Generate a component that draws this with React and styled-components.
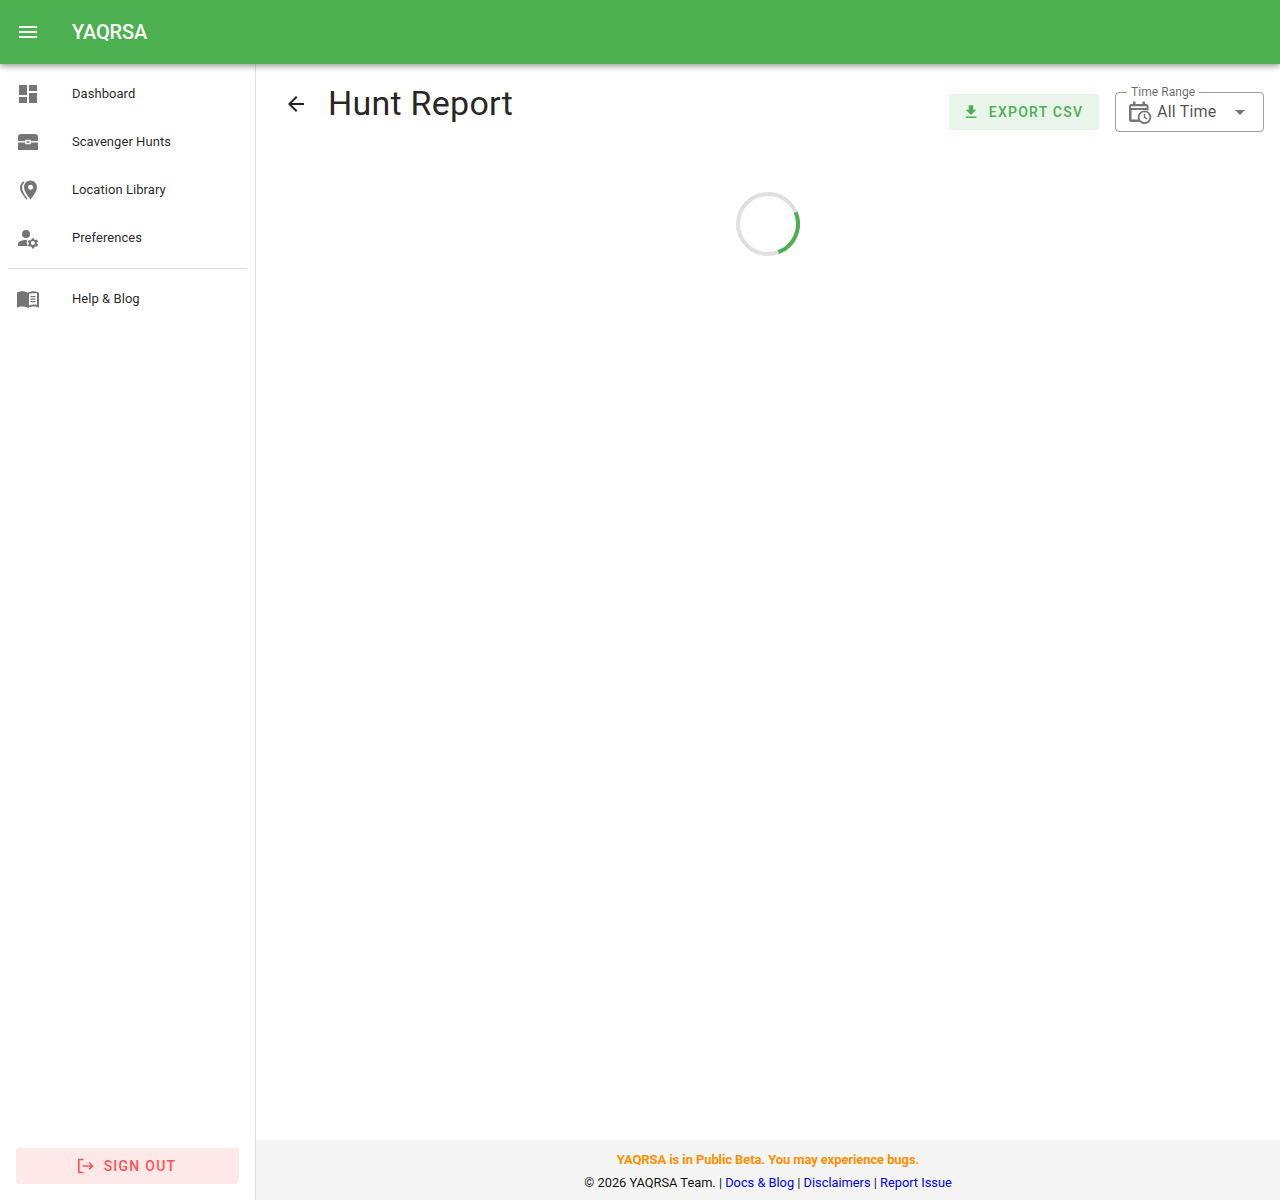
import React from 'react';
import styled, { createGlobalStyle } from 'styled-components';

const Global = createGlobalStyle`
  html, body { margin: 0; padding: 0; height: 100%; background: #fff; }
  body { font-family: Roboto, "Liberation Sans", sans-serif; color: rgba(0,0,0,.87); }
  #root { height: 100vh; }
  * { box-sizing: border-box; }
`;

const Page = styled.div`
  display: flex;
  flex-direction: column;
  height: 100vh;
  overflow: hidden;
`;
const AppBar = styled.header`
  position: relative;
  z-index: 2;
  flex: 0 0 64px;
  display: flex;
  align-items: center;
  padding-left: 16px;
  background: #4caf50;
  color: #fff;
  box-shadow: 0 2px 4px -1px rgba(0,0,0,.2), 0 4px 5px 0 rgba(0,0,0,.14), 0 1px 10px 0 rgba(0,0,0,.12);
`;
const MenuIcon = styled.svg`
  width: 24px;
  height: 24px;
  fill: #fff;
`;
const Brand = styled.div`
  margin-left: 32px;
  font-size: 20px;
  font-weight: 500;
  line-height: 32px;
  letter-spacing: -0.15px;
`;
const Body = styled.div`
  flex: 1;
  display: flex;
  min-height: 0;
`;
const Sidebar = styled.nav`
  flex: 0 0 256px;
  display: flex;
  flex-direction: column;
  padding-top: 5px;
  border-right: 1px solid #e0e0e0;
`;
const NavItem = styled.a`
  display: flex;
  align-items: center;
  height: 48px;
  padding-left: 16px;
  font-size: 13px;
  letter-spacing: 0.05px;
  color: rgba(0,0,0,.87);
`;
const NavIcon = styled.svg`
  flex: 0 0 24px;
  width: 24px;
  height: 24px;
  margin: 2px 32px 0 0;
  fill: #757575;
`;
const Divider = styled.hr`
  margin: 7px 8px 5px;
  border: 0;
  border-top: 1px solid #e0e0e0;
  height: 1px;
`;
const SignOut = styled.button`
  margin: auto 16px 16px;
  height: 36px;
  display: flex;
  align-items: center;
  justify-content: center;
  gap: 9px;
  padding: 0 2px 0 0;
  border: 0;
  border-radius: 4px;
  background: #ffe8e8;
  color: #ff5252;
  font: 500 14px Roboto, sans-serif;
  letter-spacing: 1.25px;
`;
const SignOutIcon = styled.svg`
  width: 18px;
  height: 18px;
  fill: none;
  stroke: #ff5252;
  stroke-width: 1.6;
`;
const Main = styled.main`
  flex: 1;
  min-width: 0;
  display: flex;
  flex-direction: column;
`;
const Content = styled.div`
  flex: 1;
  padding: 16px 16px 0 16px;
`;
const TitleRow = styled.div`
  display: flex;
  align-items: flex-start;
  height: 52px;
`;
const BackButton = styled.svg`
  width: 24px;
  height: 24px;
  margin: 12px 20px 0 12px;
  fill: rgba(0,0,0,.87);
`;
const Title = styled.h1`
  flex: 1;
  margin: 0;
  font-size: 34px;
  font-weight: 400;
  line-height: 46px;
  letter-spacing: 0.25px;
  color: rgba(0,0,0,.87);
`;
const Export = styled.button`
  margin-top: 14px;
  width: 150px;
  height: 36px;
  display: flex;
  align-items: center;
  justify-content: center;
  gap: 9px;
  padding: 0 3px 0 0;
  border: 0;
  border-radius: 4px;
  background: #e9f4ea;
  color: #4caf50;
  font: 500 14px Roboto, sans-serif;
  letter-spacing: 1.25px;
`;
const ExportIcon = styled.svg`
  width: 18px;
  height: 18px;
  fill: #4caf50;
`;
const Select = styled.div`
  position: relative;
  margin: 12px 0 0 16px;
  width: 149px;
  height: 40px;
  display: flex;
  align-items: center;
  padding: 0 11px 0 12px;
  border: 1px solid rgba(0,0,0,.38);
  border-radius: 4px;
  font-size: 16px;
  color: rgba(0,0,0,.7);
`;
const Legend = styled.span`
  position: absolute;
  left: 11px;
  top: -8px;
  padding: 0 4px;
  background: #fff;
  font-size: 12px;
  line-height: 14px;
  letter-spacing: 0.05px;
  color: rgba(0,0,0,.6);
`;
const CalIcon = styled.svg`
  flex: 0 0 24px;
  width: 24px;
  height: 24px;
  margin-right: 5px;
  fill: #757575;
`;
const SelectValue = styled.span`
  flex: 1;
  margin-top: -2px;
  letter-spacing: 0.2px;
`;
const Caret = styled.svg`
  width: 24px;
  height: 24px;
  fill: #757575;
`;
const SpinnerWrap = styled.div`
  display: flex;
  justify-content: center;
  margin-top: 60px;
`;
const Spinner = styled.svg`
  width: 64px;
  height: 64px;
  fill: none;
  stroke-width: 4;
`;
const Footer = styled.footer`
  flex: 0 0 60px;
  display: flex;
  flex-direction: column;
  align-items: center;
  padding-top: 10px;
  background: #f5f5f5;
  box-shadow: 0 -1px 3px rgba(0,0,0,.04);
  font-size: 12.8px;
  line-height: 20px;
  color: rgba(0,0,0,.95);
`;
const Beta = styled.div`
  font-weight: 700;
  color: #ff8f00;
  margin-bottom: 3px;
  font-size: 13px;
  letter-spacing: -0.1px;
`;
const Link = styled.a`
  color: #0000ee;
`;

const navItems = [
  ['Dashboard', <path key="a" d="M3 13h8V3H3v10zm0 8h8v-6H3v6zm10 0h8V11h-8v10zm0-18v6h8V3h-8z" />],
  ['Scavenger Hunts', <path key="b" fillRule="evenodd" d="M5 4h14a3 3 0 0 1 3 3v4h-7.2v-1.2H9.2V11H2V7a3 3 0 0 1 3-3zM2 12.5h7.2v1.7h5.6v-1.7H22V20H2zM10.6 11.2h2.8v1.6h-2.8z" />],
  ['Location Library', <g key="c"><path fillRule="evenodd" d="M14.5 2.5c-3.6 0-6.5 2.9-6.5 6.6 0 4.2 3.6 8.6 6.5 12.6 2.9-4 6.5-8.4 6.5-12.6 0-3.7-2.9-6.6-6.5-6.6zm0 4.2a2.5 2.5 0 1 1 0 5 2.5 2.5 0 0 1 0-5z" /><path d="M7.4 3.6 8.5 4.5C6.9 6 6 7.7 6 9.8c0 3 2.2 6.5 5.6 11l-.9 1C6.700 17 4 13.300 4 9.700 4 7.300 5.200 5.200 7.400 3.600z" /></g>],
  ['Preferences', <g key="d"><circle cx="10" cy="8" r="4" /><path d="M10 14c-3.500 0-8 1.600-8 3.500V20h9.700a7 7 0 0 1-.5-5.900c-.4-.1-.8-.1-1.200-.1z" /><path fillRule="evenodd" d="M20.800 17.200c0-.3.1-.5 0-.7l1.200-1-1.100-1.900-1.500.5c-.4-.3-.8-.5-1.200-.7L18 12.200h-2.200l-.3 1.600c-.4.100-.8.400-1.200.700l-1.500-.5-1.100 1.900 1.200 1c0 .4 0 .7.100 1l-1.200 1 1.100 1.900 1.500-.5c.4.300.8.500 1.200.7l.3 1.500H18l.3-1.600c.4-.1.8-.4 1.200-.7l1.500.5 1.100-1.900-1.200-1c0-.1-.1-.2-.1-.4zm-3.900 1.800a2 2 0 1 1 0-4 2 2 0 0 1 0 4z" /></g>],
];

export default function App() {
  return (
    <Page>
      <Global />
      <AppBar>
        <MenuIcon viewBox="0 0 24 24"><path d="M3 18h18v-2H3v2zm0-5h18v-2H3v2zm0-7v2h18V6H3z" /></MenuIcon>
        <Brand>YAQRSA</Brand>
      </AppBar>
      <Body>
        <Sidebar>
          {navItems.map(([label, icon]) => (
            <NavItem key={label}>
              <NavIcon viewBox="0 0 24 24">{icon}</NavIcon>
              {label}
            </NavItem>
          ))}
          <Divider />
          <NavItem>
            <NavIcon viewBox="0 0 24 24">
              <path fillRule="evenodd" d="M1 5.800C2.500 4.800 4.500 4.300 6.500 4.300c2 0 4 .5 5.500 1.500 1.500-1 3.500-1.500 5.500-1.500 2 0 4 .5 5.500 1.500v15c-1.500-.8-3.500-1.200-5.500-1.200-2 0-4 .5-5.500 1.500-1.500-1-3.500-1.500-5.500-1.500-2 0-4 .4-5.500 1.200zm12 1v11.600c1.400-.7 3-1 4.500-1 1.200 0 2.400.1 3.500.4V6.600c-1.100-.3-2.300-.4-3.500-.4-1.600 0-3.100.2-4.500.6z" />
              <path d="M14.500 9h5v1.200h-5zm0 2.500h5v1.200h-5zm0 2.500h5v1.200h-5z" />
            </NavIcon>
            Help &amp; Blog
          </NavItem>
          <SignOut>
            <SignOutIcon viewBox="0 0 18 18">
              <path d="M6.500 2.500H1.800v13H6.500M5.500 9h10M12 5.500 15.500 9 12 12.500" />
            </SignOutIcon>
            SIGN OUT
          </SignOut>
        </Sidebar>
        <Main>
          <Content>
            <TitleRow>
              <BackButton viewBox="0 0 24 24"><path d="M20 11H7.830l5.590-5.590L12 4l-8 8 8 8 1.410-1.410L7.830 13H20v-2z" /></BackButton>
              <Title>Hunt Report</Title>
              <Export>
                <ExportIcon viewBox="0 0 24 24"><path d="M5 20h14v-2H5v2zM19 9h-4V3H9v6H5l7 7 7-7z" /></ExportIcon>
                EXPORT CSV
              </Export>
              <Select>
                <Legend>Time Range</Legend>
                <CalIcon viewBox="0 0 24 24">
                  <path fillRule="evenodd" d="M5 1.500h2.500V4h7V1.500H17V4h1a2.500 2.500 0 0 1 2.500 2.500v4a8 8 0 0 0-2-.3V10h-15v9.500h7c.3.900.8 1.700 1.500 2.500H3.500A2.500 2.500 0 0 1 1 19.500v-13A2.500 2.500 0 0 1 3.500 4H5zM3 6.200v1.800h15.500V6.200z" />
                  <path fillRule="evenodd" d="M16.500 10.500a6.800 6.800 0 1 1 0 13.600 6.800 6.800 0 0 1 0-13.600zm0 1.800a5 5 0 1 0 0 10 5 5 0 0 0 0-10zm-.8 1.700h1.500v3l2.400 1.400-.8 1.200-3.100-1.800z" />
                </CalIcon>
                <SelectValue>All Time</SelectValue>
                <Caret viewBox="0 0 24 24"><path d="M7 10l5 5 5-5z" /></Caret>
              </Select>
            </TitleRow>
            <SpinnerWrap>
              <Spinner viewBox="0 0 64 64">
                <circle cx="32" cy="32" r="30" stroke="#e0e0e0" />
                <path d="M59.600 20.300A30 30 0 0 1 42.300 60.200" stroke="#4caf50" />
              </Spinner>
            </SpinnerWrap>
          </Content>
          <Footer>
            <Beta>YAQRSA is in Public Beta. You may experience bugs.</Beta>
            <div>
              © 2026 YAQRSA Team. | <Link>Docs &amp; Blog</Link> | <Link>Disclaimers</Link> | <Link>Report Issue</Link>
            </div>
          </Footer>
        </Main>
      </Body>
    </Page>
  );
}
